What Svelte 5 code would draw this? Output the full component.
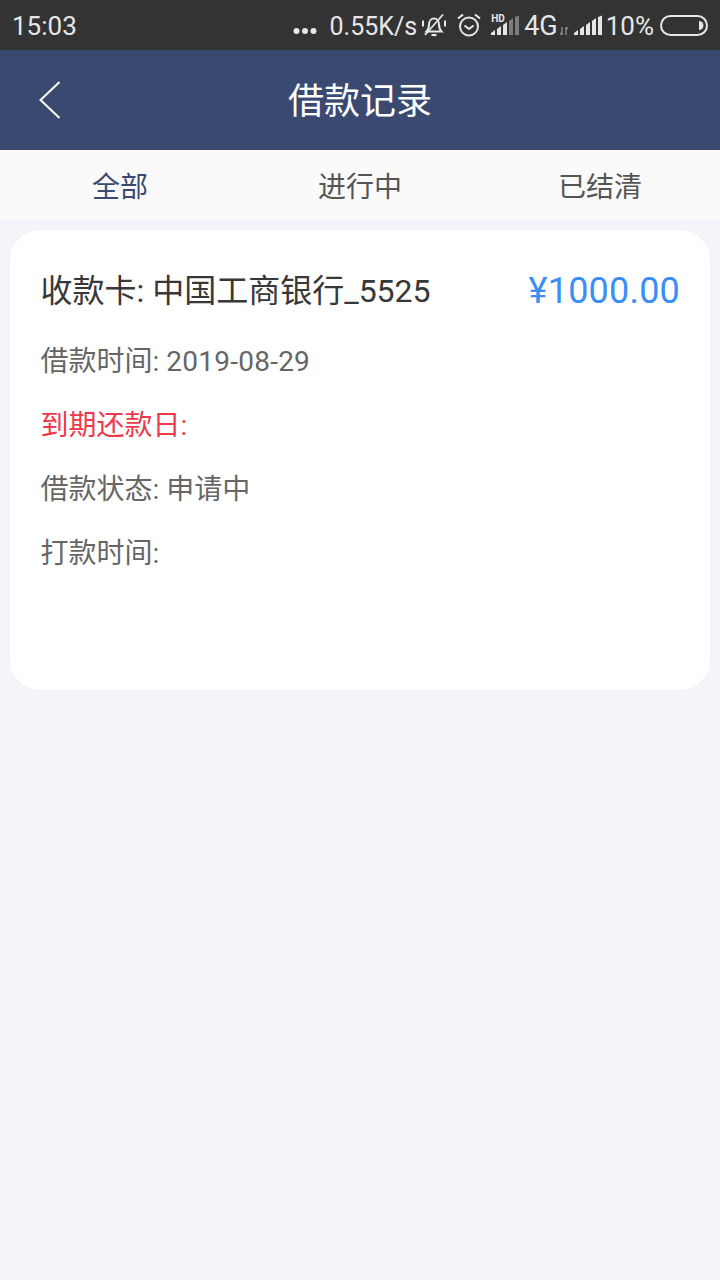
<script>
  const tabs = [
    { label: '全部', active: true },
    { label: '进行中', active: false },
    { label: '已结清', active: false }
  ];
</script>

<div class="page">
  <div class="status">
    <span class="time">15:03</span>
    <div class="status-right">
      <svg class="dots" width="24" height="8" viewBox="0 0 24 8"><circle cx="3.500" cy="4" r="3" /><circle cx="12" cy="4" r="3" /><circle cx="20.500" cy="4" r="3" /></svg>
      <span class="speed">0.55K/s</span>
      <svg class="bell" width="24" height="24" viewBox="0 0 24 24" fill="none" stroke="#e6e6e6" stroke-width="2">
        <path d="M4.500 18.500c2-2 2.500-4 2.500-7 0-3.200 2-6 5-6s5 2.800 5 6c0 3 .5 5 2.500 7z" />
        <path d="M9.500 22h5" stroke-width="2.200" />
        <path d="M3 22 21 1.500" stroke-width="1.800" />
        <path d="M1 7.500v6M23 7.500v6" stroke-width="2" />
      </svg>
      <svg class="alarm" width="24" height="24" viewBox="0 0 24 24" fill="none" stroke="#e6e6e6" stroke-width="2">
        <circle cx="12" cy="13.500" r="9" />
        <path d="M7.500 12.500 12 16l4.500-3.500" />
        <path d="M1 5.500 6 1.500M23 5.500 18 1.500" stroke-width="2.200" />
      </svg>
      <div class="hd-signal">
        <span class="hd">HD</span>
        <svg width="28" height="21" viewBox="0 0 28 21">
          <path d="M0 20v-2l4-3v5z" fill="#e6e6e6" />
          <path d="M6 20v-6l4-3v9z" fill="#e6e6e6" />
          <path d="M12 20V10l4-3v13z" fill="#e6e6e6" />
          <path d="M18 20V6l4-3v17z" fill="#7c7c7c" />
          <path d="M24 20V2l4-1.500V20z" fill="#7c7c7c" />
        </svg>
      </div>
      <span class="net">4G</span>
      <svg class="arrows" width="8" height="8" viewBox="0 0 8 8" fill="none" stroke="#8a8a8a" stroke-width="1.400"><path d="M2 0v8M0 6l2 2M6 0v8M6 0l2 2" /></svg>
      <svg class="signal" width="28" height="21" viewBox="0 0 28 21">
        <path d="M0 20v-2l4-3v5z" fill="#e6e6e6" />
        <path d="M6 20v-6l4-3v9z" fill="#e6e6e6" />
        <path d="M12 20V10l4-3v13z" fill="#e6e6e6" />
        <path d="M18 20V6l4-3v17z" fill="#e6e6e6" />
        <path d="M24 20V2l4-1.500V20z" fill="#e6e6e6" />
      </svg>
      <span class="pct">10%</span>
      <svg class="battery" width="48" height="21" viewBox="0 0 48 21" fill="none">
        <rect x="1" y="1" width="46" height="19" rx="9.500" stroke="#e6e6e6" stroke-width="2" />
        <path d="M39 6a4.500 4.500 0 0 1 0 9z" fill="#e6e6e6" />
      </svg>
    </div>
  </div>

  <header class="nav">
    <svg class="back" width="22" height="38" viewBox="0 0 22 38" fill="none" stroke="#ffffff" stroke-width="2"><path d="M20.500 1 1.500 19l19 18" /></svg>
    <h1>借款记录</h1>
  </header>

  <div class="tabs">
    {#each tabs as tab}
      <div class="tab" class:active={tab.active}>{tab.label}</div>
    {/each}
  </div>

  <section class="card">
    <div class="head">
      <span class="bank">收款卡: 中国工商银行_5525</span>
      <span class="amount">¥1000.00</span>
    </div>
    <p class="row">借款时间: <span class="date">2019-08-29</span></p>
    <p class="row due">到期还款日:</p>
    <p class="row">借款状态: 申请中</p>
    <p class="row">打款时间:</p>
  </section>
</div>

<style>
  :global(body) {
    margin: 0;
    background: #f3f5fa;
  }
  .page {
    width: 720px;
    min-height: 1280px;
    background: #f3f5fa;
    font-family: Roboto, "Noto Sans CJK SC", sans-serif;
    overflow: hidden;
  }
  .status {
    height: 50px;
    background: #333333;
    color: #e6e6e6;
    display: flex;
    align-items: center;
    justify-content: space-between;
    padding: 0 12px;
    box-sizing: border-box;
    font-size: 26px;
  }
  .time {
    margin-top: 2px;
  }
  .status-right {
    display: flex;
    align-items: center;
    height: 50px;
  }
  .status-right svg {
    display: block;
    flex: none;
  }
  .dots {
    fill: #e6e6e6;
    margin-top: 11px;
    margin-right: 12px;
  }
  .speed {
    margin-top: 2px;
    font-size: 25px;
    margin-right: 5px;
  }
  .bell {
    margin-right: 11px;
    margin-top: -1px;
  }
  .alarm {
    margin-right: 10px;
    margin-top: -1px;
  }
  .hd-signal {
    display: flex;
    position: relative;
    width: 28px;
    height: 21px;
    margin-right: 5px;
  }
  .hd {
    position: absolute;
    left: 0;
    top: -1px;
    font-size: 10px;
    line-height: 10px;
    font-weight: 700;
  }
  .net {
    margin-top: 2px;
    font-size: 27px;
    margin-right: 2px;
  }
  .arrows {
    margin-top: 11px;
    margin-right: 6px;
  }
  .signal {
    margin-right: 4px;
  }
  .pct {
    margin-top: 2px;
    margin-right: 6px;
  }
  .nav {
    height: 100px;
    box-sizing: border-box;
    padding-top: 4px;
    background: #39496f;
    position: relative;
    display: flex;
    align-items: center;
    justify-content: center;
  }
  .back {
    position: absolute;
    left: 39px;
    top: 31px;
  }
  h1 {
    margin: 0;
    color: #ffffff;
    font-size: 36px;
    font-weight: 400;
    line-height: 48px;
  }
  .tabs {
    height: 70px;
    background: #fafafa;
    display: grid;
    grid-template-columns: repeat(3, 1fr);
  }
  .tab {
    text-align: center;
    font-size: 28px;
    line-height: 75px;
    color: #555555;
  }
  .tab.active {
    color: #39496f;
  }
  .card {
    margin: 10px 10px 0;
    height: 460px;
    box-sizing: border-box;
    padding: 32px 30px 0 30.500px;
    background: #ffffff;
    border-radius: 30px;
  }
  .head {
    display: flex;
    justify-content: space-between;
    align-items: center;
    height: 58px;
    margin-bottom: 10px;
  }
  .bank {
    font-size: 32px;
    color: #383838;
    margin-bottom: 6px;
  }
  .amount {
    font-size: 36px;
    letter-spacing: 0.200px;
    color: #3a8ef8;
  }
  .row {
    margin: 0;
    font-size: 28px;
    line-height: 64px;
    color: #666666;
  }
  .date {
    letter-spacing: 0.250px;
  }
  .due {
    color: #f0384a;
  }
</style>
